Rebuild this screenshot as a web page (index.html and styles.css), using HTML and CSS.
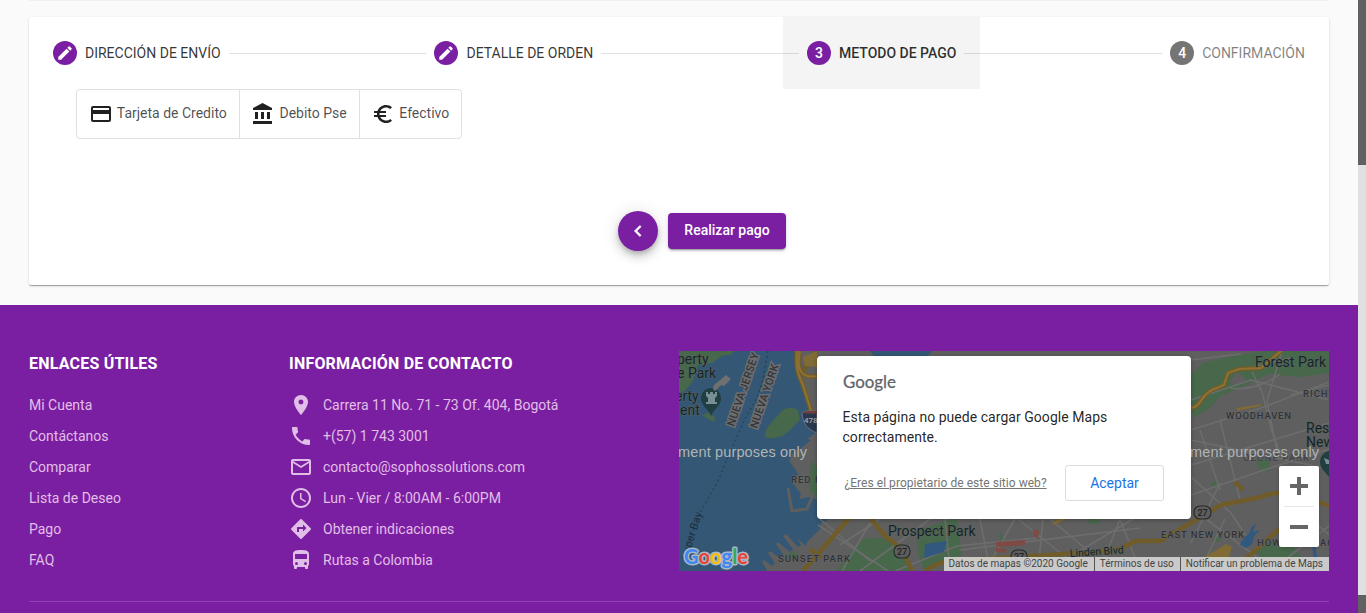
FILE: index.html
```html
<!DOCTYPE html>
<html lang="es">
<head>
<meta charset="utf-8">
<title>Metodo de pago</title>
<link rel="stylesheet" href="styles.css">
</head>
<body>
<div class="page">
<main class="content">
  <div class="previous-card"></div>
  <section class="card">
    <div class="stepper">
      <div class="step">
        <span class="step-icon"><svg width="18" height="18" viewBox="0 0 24 24"><path d="M3 17.25V21h3.75L17.81 9.94l-3.75-3.75L3 17.25zM20.71 7.04a1 1 0 0 0 0-1.41l-2.34-2.34a1 1 0 0 0-1.41 0l-1.83 1.83 3.75 3.75 1.83-1.83z"/></svg></span>
        <span class="step-label">DIRECCIÓN DE ENVÍO</span>
      </div>
      <div class="step-line"></div>
      <div class="step">
        <span class="step-icon"><svg width="18" height="18" viewBox="0 0 24 24"><path d="M3 17.25V21h3.75L17.81 9.94l-3.75-3.75L3 17.25zM20.71 7.04a1 1 0 0 0 0-1.41l-2.34-2.34a1 1 0 0 0-1.41 0l-1.83 1.83 3.75 3.75 1.83-1.83z"/></svg></span>
        <span class="step-label">DETALLE DE ORDEN</span>
      </div>
      <div class="step-line"></div>
      <div class="step step-active">
        <span class="step-icon">3</span>
        <span class="step-label">METODO DE PAGO</span>
      </div>
      <div class="step-line"></div>
      <div class="step step-pending">
        <span class="step-icon">4</span>
        <span class="step-label">CONFIRMACIÓN</span>
      </div>
    </div>
    <div class="methods">
      <div class="method"><svg class="icon" viewBox="0 0 24 24"><path d="M20 4H4c-1.11 0-1.99.89-1.99 2L2 18c0 1.11.89 2 2 2h16c1.11 0 2-.89 2-2V6c0-1.11-.89-2-2-2zm0 14H4v-6h16v6zm0-10H4V6h16v2z"/></svg><span>Tarjeta de Credito</span></div>
      <div class="method"><svg class="icon" viewBox="0 0 24 24"><path d="M4 10v7h3v-7H4zm6 0v7h3v-7h-3zM2 22h19v-3H2v3zm14-12v7h3v-7h-3zm-4.500-9L2 6v2h19V6l-9.500-5z"/></svg><span>Debito Pse</span></div>
      <div class="method"><svg class="icon" viewBox="0 0 24 24"><path d="M15 18.500c-2.510 0-4.680-1.420-5.760-3.500H15v-2H8.580c-.05-.33-.08-.66-.08-1s.03-.67.080-1H15V9H9.240C10.320 6.920 12.500 5.500 15 5.500c1.610 0 3.090.590 4.230 1.570L21 5.300C19.410 3.870 17.300 3 15 3c-3.920 0-7.240 2.510-8.480 6H3v2h3.060c-.04.330-.060.660-.060 1s.020.670.060 1H3v2h3.520c1.240 3.490 4.560 6 8.480 6 2.310 0 4.410-.870 6-2.300l-1.780-1.770c-1.130.980-2.600 1.570-4.220 1.570z"/></svg><span>Efectivo</span></div>
    </div>
    <div class="actions">
      <button class="fab"><svg class="icon" viewBox="0 0 24 24"><path d="M15.410 7.410L14 6l-6 6 6 6 1.410-1.410L10.830 12z"/></svg></button>
      <button class="primary">Realizar pago</button>
    </div>
  </section>
  <footer class="footer">
    <div class="columns">
      <div class="links">
        <h3>ENLACES ÚTILES</h3>
        <a>Mi Cuenta</a><a>Contáctanos</a><a>Comparar</a><a>Lista de Deseo</a><a>Pago</a><a>FAQ</a>
      </div>
      <div class="contact">
        <h3>INFORMACIÓN DE CONTACTO</h3>
        <div class="row"><svg class="icon" viewBox="0 0 24 24"><path d="M12 2C8.130 2 5 5.130 5 9c0 5.250 7 13 7 13s7-7.750 7-13c0-3.870-3.130-7-7-7zm0 9.500a2.500 2.500 0 0 1 0-5 2.500 2.500 0 0 1 0 5z"/></svg><span>Carrera 11 No. 71 - 73 Of. 404, Bogotá</span></div>
        <div class="row"><svg class="icon" viewBox="0 0 24 24"><path d="M6.620 10.790c1.440 2.830 3.760 5.140 6.590 6.590l2.200-2.200c.270-.270.670-.360 1.020-.240 1.120.370 2.330.570 3.570.570.550 0 1 .450 1 1V20c0 .550-.450 1-1 1-9.390 0-17-7.610-17-17 0-.550.450-1 1-1h3.500c.550 0 1 .450 1 1 0 1.250.200 2.450.570 3.570.110.350.030.740-.250 1.020l-2.200 2.200z"/></svg><span>+(57) 1 743 3001</span></div>
        <div class="row"><svg class="icon" viewBox="0 0 24 24"><path d="M20 4H4c-1.100 0-1.990.900-1.990 2L2 18c0 1.100.900 2 2 2h16c1.100 0 2-.900 2-2V6c0-1.100-.900-2-2-2zm0 14H4V8l8 5 8-5v10zm-8-7L4 6h16l-8 5z"/></svg><span>contacto@sophossolutions.com</span></div>
        <div class="row"><svg class="icon" viewBox="0 0 24 24"><path d="M11.990 2C6.470 2 2 6.480 2 12s4.470 10 9.990 10C17.520 22 22 17.520 22 12S17.520 2 11.990 2zM12 20c-4.420 0-8-3.580-8-8s3.580-8 8-8 8 3.580 8 8-3.580 8-8 8zm.5-13H11v6l5.250 3.150.75-1.230-4.500-2.670z"/></svg><span>Lun - Vier / 8:00AM - 6:00PM</span></div>
        <div class="row"><svg class="icon" viewBox="0 0 24 24"><path d="M21.710 11.290l-9-9a1 1 0 0 0-1.410 0l-9 9a1 1 0 0 0 0 1.410l9 9c.390.390 1.020.390 1.410 0l9-9a1 1 0 0 0 0-1.410zM14 14.500V12h-4v3H8v-4c0-.550.450-1 1-1h5V7.500l3.500 3.500-3.500 3.500z"/></svg><span>Obtener indicaciones</span></div>
        <div class="row"><svg class="icon" viewBox="0 0 24 24"><path d="M4 16c0 .880.390 1.670 1 2.220V20c0 .550.450 1 1 1h1c.550 0 1-.450 1-1v-1h8v1c0 .550.450 1 1 1h1c.550 0 1-.450 1-1v-1.780c.610-.550 1-1.340 1-2.220V6c0-3.500-3.580-4-8-4s-8 .500-8 4v10zm3.500 1a1.500 1.500 0 0 1 0-3 1.500 1.500 0 0 1 0 3zm9 0a1.500 1.500 0 0 1 0-3 1.500 1.500 0 0 1 0 3zm1.500-6H6V6h12v5z"/></svg><span>Rutas a Colombia</span></div>
      </div>
      <div class="map">
        <svg class="map-canvas" viewBox="679 351 650 220">
          <rect x="679" y="351" width="650" height="220" fill="#5f5f5f"/>
          <!-- water -->
          <path fill="#335775" d="M679 351H794l5 15 2 22 12 28 4 14v2l-10 7 4 1-12 10-4-1-6 12 6 8 3 5-6 8 9 12-2 5 10-2 12 3v28l-14 14-1 4-9-8 4 7-3 2-12-13-3 2 10 13-3 3-12-10-2 2 8 12-3 3-11-8-2 2 7 10-3 3-8-6-2 2 5 8-6 5-6 10H679z"/>
          <path fill="#335775" d="M870 351h62l-4 5h-54zM817 513h20l-12 9h-8z"/>
          <!-- parks -->
          <g fill="#47684a">
            <path d="M679 351h50l-17 12-14 2-5 16-8 10-6 2z"/><path d="M765 434c2-8 9-14 14-20 5-7 12-8 19-4l2 10-10 10c-6 6-11 8-17 8-5 1-9 0-8-4z"/><path d="M702 415l8-3 5 6-1 4-2-1-9-5z"/>
            <path d="M721 351h14l-5 4-12 1zM811 460l6 8v30l-8-8z"/>
            <path d="M836 571l15-20 14-13h22l14 11 10 22zM917 530l40-12 5 37-38 16-7-22zM785 556l8-5 6 4-6 6zM1000 532l5 8-5 2zM1090 519h10l-2 5h-10z"/>
            <path d="M1191 375l12-12 20-5 40-7h66v22l-30 4-30-3-25 12-24 10-10 12-16 10-3-10zM1256 460h14v12l-10-2zM1255 552l12-9 24 2 10 12h-40zM1212 482l6 1-1 6-5-2zM1212 541l8-7 2 5-7 4z"/>
          </g>
          <path fill="#5f5f5f" d="M1219 402l23-5 10 7-28 7zM1237 372l10 8-10 6-8-4z"/>
          <!-- minor streets -->
          <g fill="none" stroke="#6d6d6e" stroke-width="1.600">
            <path d="M818 525l70 46M840 545l40-26M860 571l70-52M895 571l62-25 80-8M945 519l5 52M980 519l10 52M1018 519l60 48M1050 519l60 50M1073 555l60-36M1043 519l-5 52M960 550l180-22M985 571l30-52M1100 571l20-52M1140 571l-20-52"/>
            <path d="M1191 400l60-20 78 20M1191 430l70-22 68-26M1191 465l138-42M1191 495l70-24 68-22M1200 430l20 60M1220 420l20 80M1252 372l10 20 10 40 12 30M1191 440l138 29M1220 483l-29 60M1191 477l40 36 20 30M1282 351l-15 50 10 50M1240 370l50-12M1230 388c20 3 40-6 50-14"/>
            <path d="M1206 519l60 45M1270 571l59-45M1225 519l-25 52M1290 500l39 35M1290 395l39-10M1191 360l50-6M1191 405l-4 30"/>
            <path d="M842 571l28-48M820 519l50 42"/>
          </g>
          <path fill="none" stroke="#5f5f5f" stroke-width="3" d="M788 488l4 23 15-2 6-14"/>
          <!-- highways -->
          <g fill="none" stroke="#705c29" stroke-width="4.500">
            <path d="M797 351c-1 12-1 20 6 34l9 29 4 18M817 376c-17 3-21-8-17-25M800 375c10-12 14-20 16-24"/>
            <path d="M803 571l48-55M810 549l11 9M866 513l20 24 16 12 10 22M925 571c25-17 45-9 75-13l95-6 25-3 15-8 25 0 29-17 32-19 40-8c15-6 20-4 30-1M1235 482l8 8M1230 571l25-20 24-22M1319 502l10 4"/>
            <path d="M1191 408c10-1 10-13 21-18l12-5 4-12 11-4 22-1 20-17"/>
          </g>
          <g fill="none" stroke="#8f7233" stroke-width="2"><path d="M797 351c-1 12-1 20 6 34l9 29 4 18M1191 408c10-1 10-13 21-18l12-5 4-12 11-4 22-1 20-17M800 351c-4 17 0 28 17 25"/></g>
          <path fill="#806b35" d="M803 357l14-6v16l-12-1zM1200 560l26-16 6 3-4 12zM1237 408l24-4v2l-24 5zM1052 523l14-8 2 3-13 7z"/>
          <path fill="#7f4a43" d="M996 542l29-2v5l-29 2zM1033 530l6 0-1 8-4-1zM996 548l11 1-2 4-9-1z"/>
          <path fill="#31587f" d="M925 544l22-3-3 11-20 6zM1240 545l4-8 5-3 2-6 5-5-3 9 7-2-6 6-2 8-6 4zM1312 545l3 0 5 26h-5z"/>
          <!-- ferry route and state border -->
          <path fill="none" stroke="#243744" stroke-width="1" stroke-dasharray="2 3" d="M768 351l-5 27-5 18-13 23-14 31-5 11M726 461l-8 20-17 30-20 50"/>
          <g class="map-label">
            <text x="677" y="364">perty</text><text x="677" y="378">e Park</text><text x="675" y="401">erty</text><text x="680" y="415">ent</text>
            <text x="888" y="536">Prospect Park</text><text x="1255" y="367">Forest Park</text><text x="1306" y="433">Res</text><text x="1306" y="447">New</text>
            <text x="1070" y="557" class="street" transform="rotate(-4 1070 557)">Linden Blvd</text>
          </g>
          <g class="map-area">
            <text x="1226" y="419" textLength="66">WOODHAVEN</text><text x="1303" y="397">RICH</text><text x="1243" y="461" textLength="67" opacity=".6">OZONE PARK</text><text x="791" y="483">RED HOOK</text><text x="778" y="562" textLength="73">SUNSET PARK</text><text x="1161" y="538" textLength="84">EAST NEW YORK</text><text x="1257" y="546">HOWARD</text><text x="1320" y="546">AC</text>
          </g>
          <g class="border-label"><text transform="translate(734 427) rotate(-71)" textLength="77">NUEVA JERSEY</text><text transform="translate(757 429) rotate(-71)" textLength="67">NUEVA YORK</text></g>
          <text class="bay-label" transform="translate(691 548) rotate(-72)">per Bay</text>
          <path fill="#213e40" d="M711 388a10 10 0 0 1 10 10c0 8-6 9-10 18-4-9-10-10-10-18a10 10 0 0 1 10-10z"/>
          <path fill="#789095" d="M706 392h2v2h2v-2h3v2h2v-2h2v4l-2 2v4h2v2h-11v-2h2v-4l-2-2z"/>
          <path fill="#213e40" d="M1329 451a11 11 0 0 0-9 11c0 7 5 9 9 15z"/><path fill="#789095" d="M1324 458l5 2v4h-3z"/>
          <path fill="#707070" d="M714 385l12-10 5 4-7 7-3-1-6 6-2-2z"/>
          <path fill="#29384f" stroke="#71717a" d="M802 413l4-2h11v22c-10-4-14-9-15-20z"/><path fill="#713e3e" d="M802 413l4-2h11v3z"/><text x="804" y="423" class="shield-label">478</text>
          <g fill="#5d5d5d" stroke="#25292c" stroke-width="1.100"><rect x="894" y="545" width="16" height="13" rx="6"/><rect x="1011" y="550" width="16" height="13" rx="6"/><rect x="1194" y="506" width="17" height="13" rx="6"/></g>
          <g class="route-label"><text x="897" y="555">27</text><text x="1014" y="560">27</text><text x="1197.500" y="516">27</text></g>
          <g class="watermark"><text x="678" y="457" textLength="129">ment purposes only</text><text x="1190" y="457" textLength="129">ment purposes only</text></g>
          <g class="google-color"><text x="684" y="564" textLength="64" lengthAdjust="spacingAndGlyphs"><tspan fill="#4285f4">G</tspan><tspan fill="#ea4335">o</tspan><tspan fill="#fbbc05">o</tspan><tspan fill="#4285f4">g</tspan><tspan fill="#34a853">l</tspan><tspan fill="#ea4335">e</tspan></text></g>
        </svg>
        <div class="dialog">
          <svg class="google-logo" viewBox="0 0 54 20"><text x="0" y="17" textLength="53" lengthAdjust="spacingAndGlyphs">Google</text></svg>
          <p>Esta página no puede cargar Google Maps correctamente.</p>
          <div class="dialog-actions"><a>¿Eres el propietario de este sitio web?</a><button>Aceptar</button></div>
        </div>
        <div class="zoom-control">
          <svg viewBox="0 0 40 81"><path fill="#666" d="M11 18h7v-7h4v7h7v4h-7v7h-4v-7h-7zM11 59h18v4H11z"/><path fill="#e6e6e6" d="M5 40h30v1H5z"/></svg>
        </div>
        <div class="attribution"><span>Datos de mapas ©2020 Google</span><span>Términos de uso</span><span>Notificar un problema de Maps</span></div>
      </div>
    </div>
    <div class="divider"></div>
  </footer>
</main>
<div class="scrollbar"><div class="thumb"></div><div class="track"></div><div class="scroll-end"></div></div>
</div>
</body>
</html>
```
FILE: styles.css
```css
* { box-sizing: border-box; }
body { margin: 0; overflow: hidden; background: #fafafa; color: rgba(0,0,0,.87); font: 14px/20px Roboto, sans-serif; }
button { font-family: inherit; border: 0; padding: 0; }
.page { display: flex; height: 613px; overflow: hidden; }
.content { width: 1358px; flex: none; }
.icon { width: 24px; height: 24px; flex: none; fill: currentColor; display: block; }

.previous-card { height: 1px; margin: 0 29px 16px; background: #f0f0f0; }
.card { height: 268px; margin: 0 29px 20px; background: #fff; border-radius: 2px; box-shadow: 0 2px 1px -1px rgba(0,0,0,.2), 0 1px 1px rgba(0,0,0,.14), 0 1px 3px rgba(0,0,0,.12); }

.stepper { display: flex; align-items: center; height: 72px; }
.step { display: flex; align-items: center; gap: 8px; height: 72px; padding: 0 24px; white-space: nowrap; }
.step-icon { display: flex; align-items: center; justify-content: center; width: 24px; height: 24px; border-radius: 50%; background: #7b1fa2; color: #fff; fill: #fff; font-weight: 500; }
.step-label { color: rgba(0,0,0,.8); }
.step-active { background: #f4f4f4; font-weight: 500; }
.step-active .step-label { color: rgba(0,0,0,.82); }
.step-pending .step-icon { background: #757575; }
.step-pending .step-label { color: rgba(0,0,0,.5); }
.step-line { flex: 1; height: 1px; margin: 0 -16px; background: rgba(0,0,0,.12); z-index: 1; }

.methods { display: flex; width: fit-content; margin-left: 47px; border: 1px solid #e0e0e0; border-radius: 4px; color: rgba(0,0,0,.87); }
.method { display: flex; align-items: center; gap: 4px; height: 48px; padding: 0 11.800px; }
.method + .method { border-left: 1px solid #e0e0e0; }
.method span { position: relative; top: -1px; color: rgba(0,0,0,.7); }

.actions { display: flex; align-items: center; justify-content: center; gap: 10px; margin-top: 72px; padding-left: 46px; }
.fab { display: flex; align-items: center; justify-content: center; width: 40px; height: 40px; border-radius: 50%; background: #7b1fa2; color: #fff; box-shadow: 0 3px 5px -1px rgba(0,0,0,.2), 0 6px 10px rgba(0,0,0,.14), 0 1px 18px rgba(0,0,0,.12); }
.fab .icon { width: 22px; height: 22px; stroke: #fff; stroke-width: .6px; }
.primary { width: 118px; height: 36px; padding-bottom: 2px; border-radius: 4px; background: #7b1fa2; color: #fff; font-size: 14px; font-weight: 500; box-shadow: 0 3px 1px -2px rgba(0,0,0,.2), 0 2px 2px rgba(0,0,0,.14), 0 1px 5px rgba(0,0,0,.12); }

.footer { height: 308px; padding: 46px 29px 0; background: #7b1fa2; color: #e1bee7; }
.columns { display: grid; grid-template-columns: 260px 390px 650px; grid-template-rows: 220px; height: 220px; }
.footer h3 { margin: 0 0 16px; padding-top: 1px; color: #fff; font-size: 16px; line-height: 24px; font-weight: 700; letter-spacing: .21px; }
.links { display: flex; flex-direction: column; }
.links a { height: 31px; flex: none; line-height: 26px; }
.contact .row { display: flex; align-items: center; gap: 10px; height: 31px; padding-bottom: 5px; }
.divider { height: 1px; margin-top: 30px; background: #9143b1; }

.map { position: relative; height: 220px; overflow: hidden; }
.map-canvas { display: block; width: 650px; height: 220px; }
.map-label { font: 14px Roboto, sans-serif; fill: #162427; stroke: #5b6562; stroke-width: 1px; paint-order: stroke; }
.street { font-size: 10.5px; }
.map-area { font: 500 9.5px Roboto, sans-serif; letter-spacing: 1px; fill: #2f3338; stroke: #686868; stroke-width: 1px; paint-order: stroke; }
.border-label { font: 500 11px Roboto, sans-serif; fill: #343638; stroke: #6c6d6f; stroke-width: 3px; paint-order: stroke; }
.bay-label { font: 11px Roboto, sans-serif; fill: #1e303f; }
.shield-label { font: 500 8px Roboto, sans-serif; fill: #aaa; }
.route-label { font: 500 9px Roboto, sans-serif; fill: #222; }
.watermark { font: 14.500px "Liberation Sans", sans-serif; fill: #b1b4b5; }
.google-color { font: 700 20px Lato, sans-serif; stroke: #a9b9c4; stroke-width: 3px; stroke-linejoin: round; paint-order: stroke; }
.dialog { position: absolute; left: 138px; top: 5px; width: 374px; height: 163px; padding: 15px 24px 15px 25.5px; border-radius: 4px; background: #fff; box-shadow: 0 1px 4px rgba(0,0,0,.3); color: rgba(0,0,0,.87); }
.google-logo { display: block; width: 54px; height: 20px; overflow: visible; font: 17px Lato, sans-serif; fill: #5f6368; stroke: #5f6368; stroke-width: .25px; }
.dialog p { width: 290px; margin: 16px 0 18px; letter-spacing: .04px; }
.dialog-actions { display: flex; align-items: center; justify-content: space-between; padding: 0 3px 0 2px; }
.dialog-actions a { font-size: 12px; letter-spacing: .04px; color: #757575; text-decoration: underline; white-space: nowrap; }
.dialog-actions button { width: 99px; height: 36px; border: 1px solid #dadce0; border-radius: 3px; background: #fff; color: #1a73e8; font-size: 14px; }
.zoom-control { position: absolute; left: 600px; top: 115px; width: 40px; height: 81px; border-radius: 2px; background: #fff; box-shadow: 0 1px 4px -1px rgba(0,0,0,.3); }
.zoom-control svg { display: block; }
.attribution { position: absolute; right: 0; bottom: 0; display: flex; height: 14px; background: rgba(218,218,218,.88); color: #444; font-size: 10px; line-height: 14px; white-space: nowrap; }
.attribution span { padding: 0 6px 0 5px; }
.attribution span + span { border-left: 1px solid #555; }

.scrollbar { display: flex; flex-direction: column; width: 8px; }
.thumb { height: 165px; background: #616161; }
.track { flex: 1; background: #e0e0e0; }
.scroll-end { height: 18px; background: #616161; }
```
